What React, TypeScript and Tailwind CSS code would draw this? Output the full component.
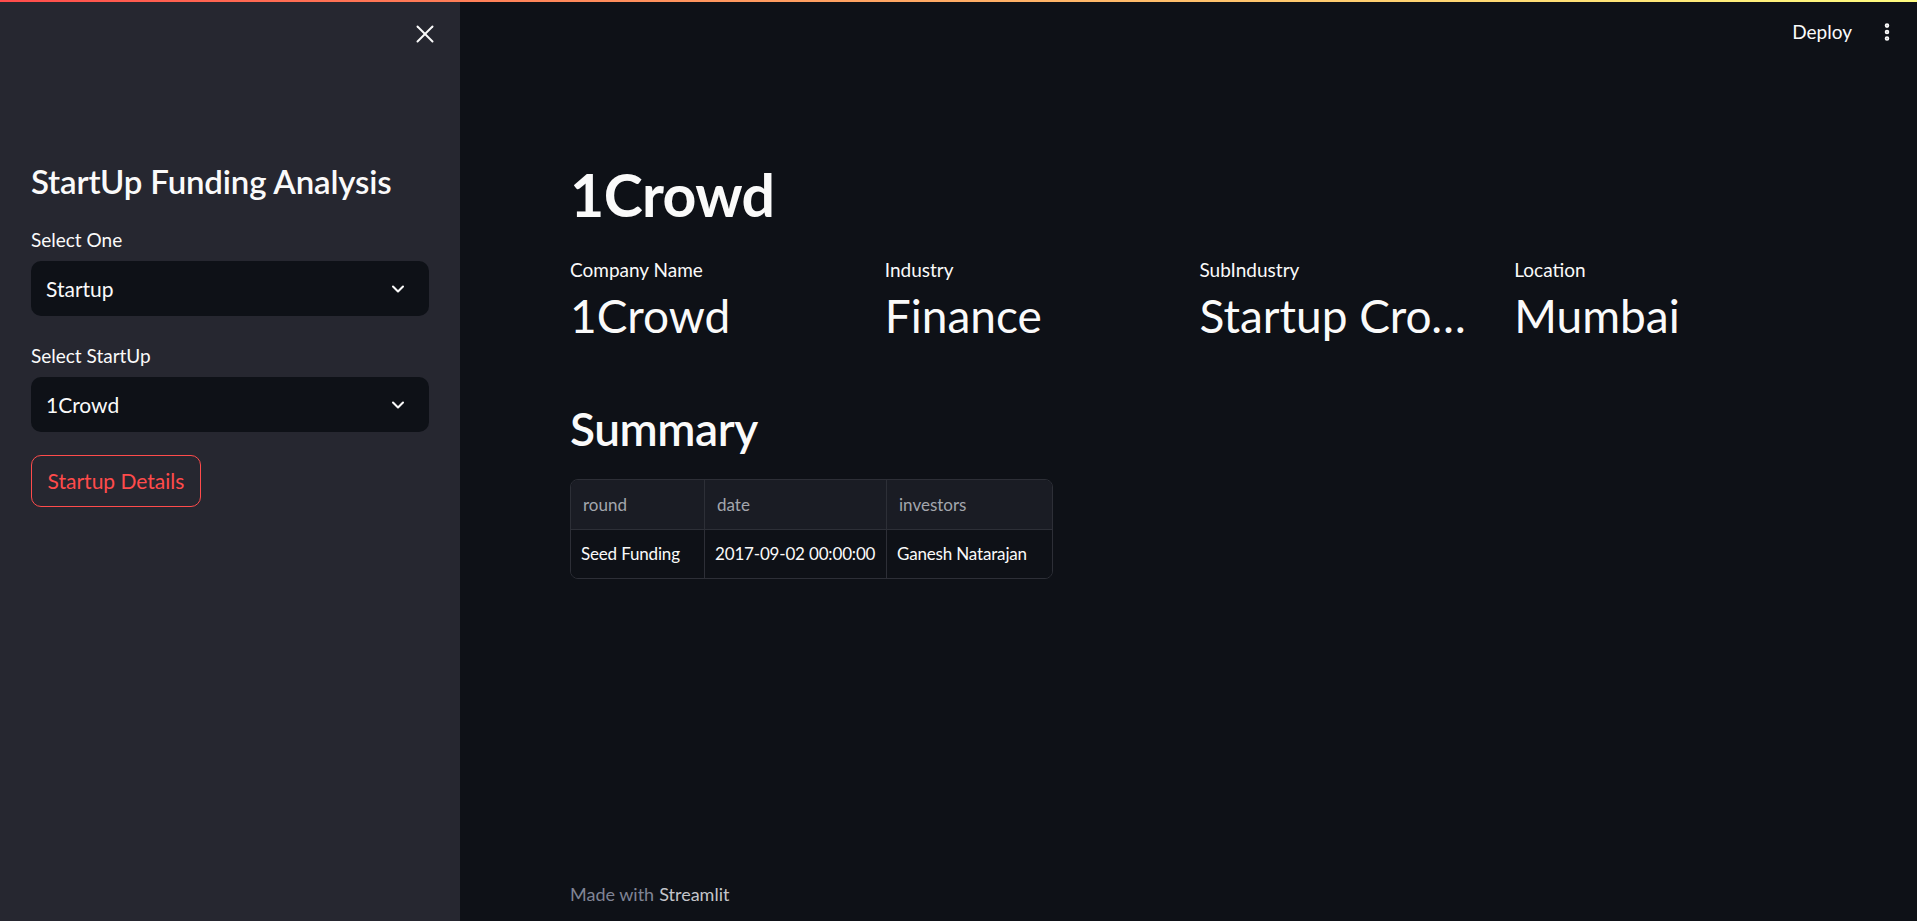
import { X, ChevronDown, EllipsisVertical } from 'lucide-react'

type Metric = {
  label: string
  value: string
}

const metrics: Metric[] = [
  { label: 'Company Name', value: '1Crowd' },
  { label: 'Industry', value: 'Finance' },
  { label: 'SubIndustry', value: 'Startup Crowdfunding' },
  { label: 'Location', value: 'Mumbai' },
]

const columns = [
  { key: 'round', width: 'w-[133px]' },
  { key: 'date', width: 'w-[182px]' },
  { key: 'investors', width: 'w-[166px]' },
]

const rows = [['Seed Funding', '2017-09-02 00:00:00', 'Ganesh Natarajan']]

function SelectBox({ label, value }: { label: string; value: string }) {
  return (
    <div className="mt-[28px]">
      <div className="text-[19px] leading-[24px] text-[#fafafa]">{label}</div>
      <div className="mt-[9px] h-[55px] rounded-[10px] bg-[#0e1117] flex items-center justify-between pl-[15px] pr-[21px]">
        <span className="text-[21px] text-[#fafafa]">{value}</span>
        <ChevronDown className="w-[20px] h-[20px] text-[#fafafa]" strokeWidth={2.5} />
      </div>
    </div>
  )
}

function App() {
  return (
    <div
      className="relative h-screen w-full flex overflow-hidden bg-[#0e1117] text-[#fafafa]"
      style={{ fontFamily: 'Lato, "Noto Sans", sans-serif' }}
    >
      {/* top decoration */}
      <div className="absolute top-0 left-0 right-0 h-[2px] bg-gradient-to-r from-[#ff4b4b] to-[#fffd80] z-10" />

      {/* sidebar */}
      <aside className="w-[460px] shrink-0 h-full bg-[#262730] flex flex-col px-[31px]">
        <div className="h-[68px] flex items-center justify-end -mr-[11px]">
          <X className="w-[30px] h-[30px] text-[#fafafa]" strokeWidth={1.6} />
        </div>
        <h1 className="mt-[94px] text-[33px] leading-[38px] font-semibold tracking-[-0.005em]">
          StartUp Funding Analysis
        </h1>
        <SelectBox label="Select One" value="Startup" />
        <SelectBox label="Select StartUp" value="1Crowd" />
        <button className="mt-[23px] w-[170px] h-[52px] rounded-[10px] border border-[#ff4b4b] text-[#ff4b4b] text-[21px]">
          Startup Details
        </button>
      </aside>

      {/* main */}
      <main className="flex-1 min-w-0 h-full flex flex-col">
        <header className="h-[64px] shrink-0 flex items-center justify-end pr-[19px] gap-[24px]">
          <span className="text-[19px]">Deploy</span>
          <EllipsisVertical className="w-[22px] h-[22px]" strokeWidth={3} />
        </header>

        <div className="flex-1 px-[110px]">
          <h1 className="mt-[95px] text-[59px] leading-[72px] font-bold tracking-[-0.01em]">1Crowd</h1>

          <div className="mt-[27px] grid grid-cols-4 gap-[22px]">
            {metrics.map(m => (
              <div key={m.label} className="min-w-0">
                <div className="text-[19px] leading-[24px]">{m.label}</div>
                <div className="mt-[6px] text-[46px] leading-[56px] overflow-hidden text-ellipsis whitespace-nowrap">
                  {m.value}
                </div>
              </div>
            ))}
          </div>

          <h2 className="mt-[56px] text-[46px] leading-[58px] font-semibold tracking-[-0.01em]">Summary</h2>

          <div className="mt-[21px] inline-flex flex-col rounded-[8px] border border-[#2d2f37] overflow-hidden text-[17px]">
            <div className="flex bg-[#1a1c24] h-[49px]">
              {columns.map((c, i) => (
                <div
                  key={c.key}
                  className={`${c.width} flex items-center px-[12px] text-[#a3a6ad] ${i > 0 ? 'border-l border-[#2d2f37]' : ''}`}
                >
                  {c.key}
                </div>
              ))}
            </div>
            {rows.map((r, ri) => (
              <div key={ri} className="flex h-[49px] border-t border-[#2d2f37] bg-[#0e1117]">
                {r.map((cell, i) => (
                  <div
                    key={i}
                    className={`${columns[i].width} flex items-center px-[10px] whitespace-nowrap tracking-[-0.01em] ${i > 0 ? 'border-l border-[#2d2f37]' : ''}`}
                  >
                    {cell}
                  </div>
                ))}
              </div>
            ))}
          </div>
        </div>

        <footer className="h-[40px] shrink-0 px-[110px] text-[18px] flex items-start">
          <span className="text-[#808495]">Made with</span>
          <span className="ml-[5px] text-[#c4c5ca]">Streamlit</span>
        </footer>
      </main>
    </div>
  )
}

export default App
